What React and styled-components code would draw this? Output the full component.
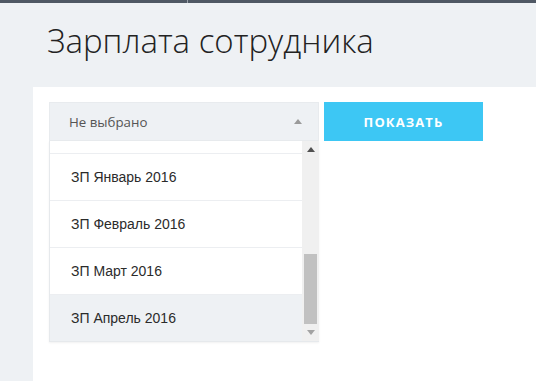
import React, { useEffect, useRef } from "react";
import styled, { createGlobalStyle } from "styled-components";

const GlobalStyle = createGlobalStyle`
  html, body {
    margin: 0;
    padding: 0;
    height: 100%;
    background: #eef1f4;
    font-family: "Open Sans", "Liberation Sans", sans-serif;
  }
  #root {
    height: 100%;
  }
`;

const Page = styled.div`
  height: 100%;
  display: flex;
  flex-direction: column;
`;

const TopBar = styled.div`
  height: 3px;
  background: #4f5864;
  display: flex;
`;

const TopTab = styled.div`
  width: 187px;
  border-right: 1px solid #9aa1a9;
`;

const Header = styled.div`
  height: 84px;
  padding-left: 47px;
  box-sizing: border-box;
`;

const Title = styled.h1`
  margin: 0;
  padding-top: 17px;
  font-weight: 300;
  font-size: 33px;
  line-height: 42px;
  color: #222;
`;

const Panel = styled.div`
  flex: 1;
  margin-left: 33px;
  background: #fff;
  padding: 15px 16px;
  display: flex;
  align-items: flex-start;
  gap: 5px;
`;

const SelectWrap = styled.div`
  width: 270px;
  display: flex;
  flex-direction: column;
`;

const SelectHead = styled.div`
  height: 39px;
  background: #eef1f4;
  border: 1px solid #e8ebee;
  box-sizing: border-box;
  display: flex;
  align-items: center;
  justify-content: space-between;
  padding: 0 16px 0 19px;
  font-size: 13.3px;
  color: #555;
`;

const Caret = styled.span`
  width: 0;
  height: 0;
  border-left: 4px solid transparent;
  border-right: 4px solid transparent;
  border-bottom: ${({ down }) => (down ? "0" : "5px solid")};
  border-top: ${({ down }) => (down ? "5px solid" : "0")};
  color: ${({ color }) => color};
`;

const List = styled.div`
  height: 200px;
  display: flex;
  border-left: 1px solid #e6e9ec;
  border-bottom: 1px solid #e6e9ec;
  box-shadow: 0 1px 2px rgba(0, 0, 0, 0.06);
`;

const Options = styled.div`
  flex: 1;
  overflow: hidden;
`;

const Option = styled.div`
  height: 46px;
  border-top: 1px solid #eceef1;
  display: flex;
  align-items: center;
  padding-left: 21px;
  font-family: "Liberation Sans", Arial, sans-serif;
  font-size: 14px;
  color: #2b2b2b;
  background: ${({ active }) => (active ? "#eef1f4" : "#fff")};
`;

const Scrollbar = styled.div`
  width: 17px;
  background: #f0f0f0;
  display: flex;
  flex-direction: column;
  align-items: center;
`;

const ScrollBtn = styled.div`
  height: 17px;
  width: 100%;
  display: flex;
  align-items: center;
  justify-content: center;
`;

const Track = styled.div`
  flex: 1;
  width: 100%;
  display: flex;
  flex-direction: column;
  justify-content: flex-end;
  align-items: center;
`;

const Thumb = styled.div`
  width: 13px;
  height: 70px;
  background: #c1c1c1;
`;

const ShowButton = styled.button`
  width: 159px;
  height: 39px;
  border: 0;
  background: #3dc7f4;
  color: #fff;
  font-family: "Open Sans", sans-serif;
  font-weight: 700;
  font-size: 13px;
  letter-spacing: 1.1px;
  cursor: pointer;
`;

const months = [
  "ЗП Декабрь 2015",
  "ЗП Январь 2016",
  "ЗП Февраль 2016",
  "ЗП Март 2016",
  "ЗП Апрель 2016",
];

const App = () => {
  const listRef = useRef();

  useEffect(() => {
    if (listRef.current) listRef.current.scrollTop = 35;
  }, []);

  return (
    <Page>
      <GlobalStyle />
      <TopBar>
        <TopTab />
      </TopBar>
      <Header>
        <Title>Зарплата сотрудника</Title>
      </Header>
      <Panel>
        <SelectWrap>
          <SelectHead>
            <span>Не выбрано</span>
            <Caret color="#9a9a9a" />
          </SelectHead>
          <List>
            <Options ref={listRef}>
              {months.map((m, i) => (
                <Option key={m} active={i === months.length - 1}>
                  {m}
                </Option>
              ))}
            </Options>
            <Scrollbar>
              <ScrollBtn>
                <Caret color="#505050" />
              </ScrollBtn>
              <Track>
                <Thumb />
              </Track>
              <ScrollBtn>
                <Caret down color="#a3a3a3" />
              </ScrollBtn>
            </Scrollbar>
          </List>
        </SelectWrap>
        <ShowButton>ПОКАЗАТЬ</ShowButton>
      </Panel>
    </Page>
  );
};

export default App;
